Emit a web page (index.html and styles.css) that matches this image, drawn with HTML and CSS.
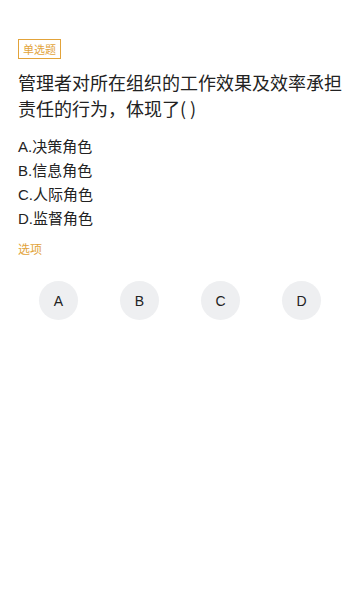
FILE: index.html
```html
<!DOCTYPE html>
<html lang="zh-CN">
<head>
<meta charset="utf-8">
<link rel="stylesheet" href="styles.css">
</head>
<body>
<div class="page">
  <div class="badge">单选题</div>
  <div class="title">管理者对所在组织的工作效果及效率承担责任的行为，体现了( )</div>
  <div class="options">
    <div class="opt">A.决策角色</div>
    <div class="opt">B.信息角色</div>
    <div class="opt">C.人际角色</div>
    <div class="opt">D.监督角色</div>
  </div>
  <div class="label">选项</div>
  <div class="choices">
    <div class="cell"><div class="circle">A</div></div>
    <div class="cell"><div class="circle">B</div></div>
    <div class="cell"><div class="circle">C</div></div>
    <div class="cell"><div class="circle">D</div></div>
  </div>
</div>
</body>
</html>
```
FILE: styles.css
```css
html, body {
  margin: 0;
  padding: 0;
  background: #fff;
}
body {
  font-family: "Noto Sans CJK SC", "Noto Sans", sans-serif;
  color: #222;
}
.page {
  padding: 39px 18px 0 18px;
}
.badge {
  display: block;
  width: fit-content;
  box-sizing: border-box;
  height: 20px;
  line-height: 18px;
  padding: 0 4px;
  border: 1px solid #e2a33a;
  color: #e2a33a;
  font-size: 11px;
}
.title {
  margin-top: 10px;
  font-size: 18px;
  line-height: 26px;
  color: #222;
}
.options {
  margin-top: 14px;
}
.opt {
  font-family: "Liberation Sans", "Noto Sans CJK SC", sans-serif;
  font-size: 15px;
  line-height: 24px;
  color: #222;
}
.label {
  margin-top: 9px;
  font-size: 12px;
  line-height: 18px;
  color: #e2a33a;
}
.choices {
  margin-top: 23px;
  display: grid;
  grid-template-columns: repeat(4, 1fr);
}
.cell {
  display: flex;
  justify-content: center;
}
.circle {
  width: 39px;
  height: 39px;
  border-radius: 50%;
  background: #eeeff1;
  display: flex;
  align-items: center;
  justify-content: center;
  font-family: "Liberation Sans", Arial, sans-serif;
  font-size: 14px;
  color: #222;
}
```
